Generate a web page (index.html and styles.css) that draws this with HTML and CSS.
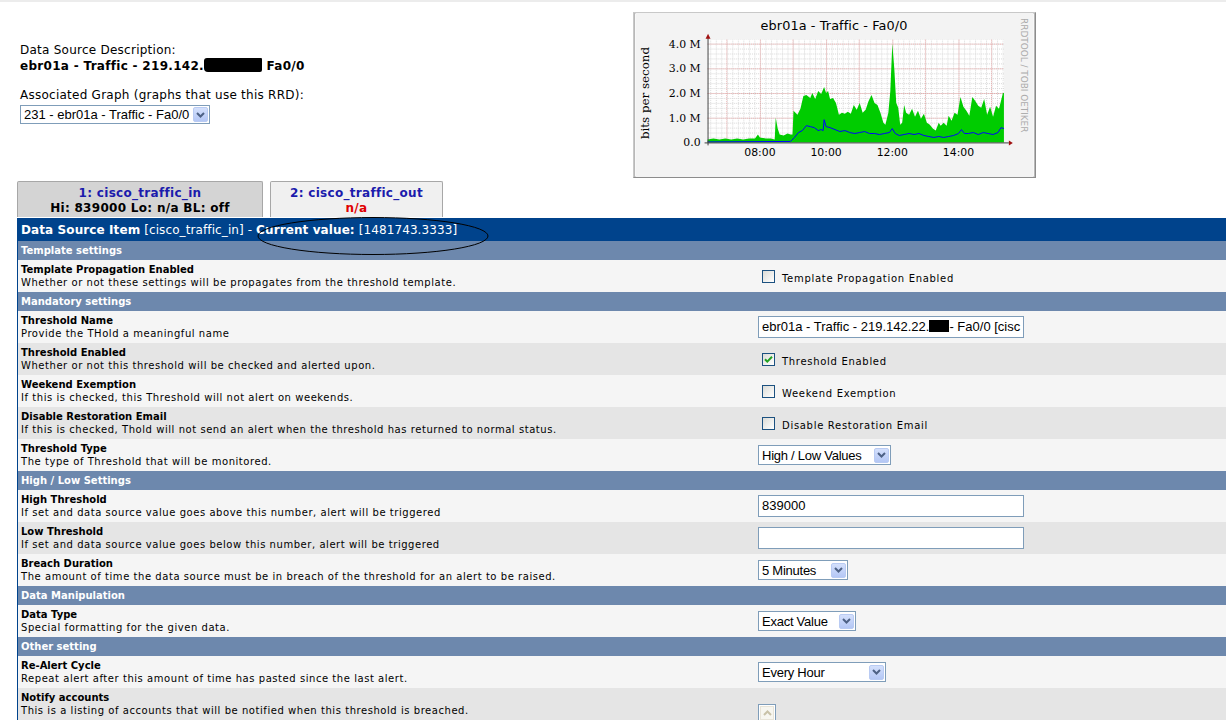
FILE: index.html
```html
<!DOCTYPE html>
<html>
<head>
<meta charset="utf-8">
<link rel="stylesheet" href="styles.css">
</head>
<body>
<div class="top">
  <div class="desc">
    <div class="lbl">Data Source Description:</div>
    <div class="val">ebr01a - Traffic - 219.142.<span class="redact"></span> Fa0/0</div>
    <div class="lbl assoc">Associated Graph (graphs that use this RRD):</div>
    <div class="sel sel-graph"><span class="sel-text">231 - ebr01a - Traffic - Fa0/0</span><span class="sel-btn"><svg width="9" height="6" viewBox="0 0 9 6"><path d="M1 1 L4.5 4.5 L8 1" fill="none" stroke="#4d6185" stroke-width="2"/></svg></span></div>
  </div>
  <svg class="graph" width="403" height="166" viewBox="0 0 403 166">
    <defs>
      <pattern id="minorV" x="92.5" y="0" width="5.583" height="4" patternUnits="userSpaceOnUse">
        <line x1="0.5" y1="0" x2="0.5" y2="4" stroke="#d8d8d8" stroke-width="1" stroke-dasharray="1,1"/>
      </pattern>
      <pattern id="minorH" x="0" y="1" width="4" height="5" patternUnits="userSpaceOnUse">
        <line x1="0" y1="0.5" x2="4" y2="0.5" stroke="#d8d8d8" stroke-width="1" stroke-dasharray="1,1"/>
      </pattern>
    </defs>
    <rect x="0" y="0" width="403" height="166" fill="#f3f3f3"/>
    <rect x="73" y="27" width="300" height="104" fill="#ffffff"/>
    <rect x="73" y="27" width="300" height="104" fill="url(#minorV)"/>
    <rect x="73" y="27" width="300" height="104" fill="url(#minorH)"/>
    <g stroke="#e8a8a8" stroke-width="1" stroke-dasharray="1,1">
      <line x1="92.5" y1="27" x2="92.5" y2="131"/>
      <line x1="126.5" y1="27" x2="126.5" y2="131"/>
      <line x1="159.5" y1="27" x2="159.5" y2="131"/>
      <line x1="193.5" y1="27" x2="193.5" y2="131"/>
      <line x1="226.5" y1="27" x2="226.5" y2="131"/>
      <line x1="260.5" y1="27" x2="260.5" y2="131"/>
      <line x1="293.5" y1="27" x2="293.5" y2="131"/>
      <line x1="327.5" y1="27" x2="327.5" y2="131"/>
      <line x1="360.5" y1="27" x2="360.5" y2="131"/>
      <line x1="73" y1="31.5" x2="373" y2="31.5"/>
      <line x1="73" y1="56.5" x2="373" y2="56.5"/>
      <line x1="73" y1="81.5" x2="373" y2="81.5"/>
      <line x1="73" y1="106.5" x2="373" y2="106.5"/>
    </g>
    <polygon fill="#00cc00" points="73,131 73,128 79,127 85,128 91,127 97,128 103,127 109,128 115,127 121,127 124,123 126,126 132,127 137,127 141,128 142,106 144,117 146,123 150,124 154,122 157,123 159,123 160,99 164,103 167,97 170,84 173,83 177,86 179,81 182,87 185,79 188,82 191,75 193,81 195,79 197,87 200,86 203,91 206,103 209,101 212,102 215,100 218,102 221,93 224,98 227,91 230,101 233,98 236,89 239,83 242,91 245,93 248,101 251,111 253,113 256,101 258,79 260,31 262,56 264,91 266,96 268,113 270,111 272,93 274,101 277,103 280,97 283,105 286,99 289,107 292,102 295,111 298,113 301,117 304,119 307,111 309,114 312,111 315,114 317,104 320,109 323,101 326,103 329,85 332,95 335,99 338,104 341,85 344,89 347,94 350,96 353,87 356,103 359,95 362,105 365,94 368,97 370,89 372,81 373,81 373,131"/>
    <polyline fill="none" stroke="#0000ff" stroke-width="1" points="73,130.5 157,130 161,126 165,121 169,119 173,114 177,115 181,116 185,119 188,118 190,119 191,108 193,115 197,116 202,118 207,120 212,119 217,121 222,122 227,121 232,120 237,122 242,122 247,123 252,122 257,121 260,117 263,122 267,124 272,123 277,122 282,123 287,122 292,124 297,125 302,126 307,125 312,126 317,125 322,124 327,122 330,118 333,122 337,122 342,121 347,123 352,121 357,122 362,123 367,121 370,116 373,117"/>
    <line x1="70" y1="131.5" x2="378" y2="131.5" stroke="#404040" stroke-width="1"/>
    <line x1="73.5" y1="134" x2="73.5" y2="25" stroke="#404040" stroke-width="1"/>
    <polygon points="378,129 382,131.5 378,134" fill="#a01010"/>
    <polygon points="71,26 73.5,21 76,26" fill="#a01010"/>
    <g class="g-ylab" text-anchor="end">
      <text x="66" y="35">4.0 M</text>
      <text x="66" y="60">3.0 M</text>
      <text x="66" y="85">2.0 M</text>
      <text x="66" y="110">1.0 M</text>
      <text x="66" y="135">0.0</text>
    </g>
    <g class="g-xlab" text-anchor="middle">
      <text x="126" y="145">08:00</text>
      <text x="193" y="145">10:00</text>
      <text x="260" y="145">12:00</text>
      <text x="327" y="145">14:00</text>
    </g>
    <text class="g-title" x="201" y="17" text-anchor="middle">ebr01a - Traffic - Fa0/0</text>
    <text class="g-vlab" x="0" y="0" text-anchor="middle" transform="translate(14,81) rotate(-90)">bits per second</text>
    <text class="g-wm" x="0" y="0" text-anchor="middle" transform="translate(390,63) rotate(90)">RRDTOOL / TOBI OETIKER</text>
  </svg>
</div>

<div class="tabs">
  <div class="tab tab-active">
    <div class="tab-name">1: cisco_traffic_in</div>
    <div class="tab-info">Hi: 839000 Lo: n/a BL: off</div>
  </div>
  <div class="tab">
    <div class="tab-name">2: cisco_traffic_out</div>
    <div class="tab-info tab-na">n/a</div>
  </div>
</div>

<div class="panel">
  <svg class="ellipse" width="236" height="42" viewBox="0 0 236 42"><ellipse cx="118" cy="20" rx="115" ry="18.5" fill="none" stroke="#000" stroke-width="1"/></svg>
  <div class="hdr"><b>Data Source Item</b> [cisco_traffic_in] - <b>Current value:</b> [1481743.3333]</div>

  <div class="sec">Template settings</div>
  <div class="row light">
    <div class="info"><div class="t">Template Propagation Enabled</div><div class="d">Whether or not these settings will be propagates from the threshold template.</div></div>
    <div class="ctl"><span class="cb"></span><span class="cbl">Template Propagation Enabled</span></div>
  </div>

  <div class="sec">Mandatory settings</div>
  <div class="row light">
    <div class="info"><div class="t">Threshold Name</div><div class="d">Provide the THold a meaningful name</div></div>
    <div class="ctl"><div class="inp">ebr01a - Traffic - 219.142.22.<span class="redact2"></span>- Fa0/0 [cisc</div></div>
  </div>
  <div class="row dark">
    <div class="info"><div class="t">Threshold Enabled</div><div class="d">Whether or not this threshold will be checked and alerted upon.</div></div>
    <div class="ctl"><span class="cb"><svg width="11" height="11" viewBox="0 0 11 11"><path d="M2 5.2 L4.3 7.6 L9 2.8" fill="none" stroke="#21a121" stroke-width="2"/></svg></span><span class="cbl">Threshold Enabled</span></div>
  </div>
  <div class="row light">
    <div class="info"><div class="t">Weekend Exemption</div><div class="d">If this is checked, this Threshold will not alert on weekends.</div></div>
    <div class="ctl"><span class="cb"></span><span class="cbl">Weekend Exemption</span></div>
  </div>
  <div class="row dark">
    <div class="info"><div class="t">Disable Restoration Email</div><div class="d">If this is checked, Thold will not send an alert when the threshold has returned to normal status.</div></div>
    <div class="ctl"><span class="cb"></span><span class="cbl">Disable Restoration Email</span></div>
  </div>
  <div class="row light">
    <div class="info"><div class="t">Threshold Type</div><div class="d">The type of Threshold that will be monitored.</div></div>
    <div class="ctl"><div class="sel sel-type"><span class="sel-text">High / Low Values</span><span class="sel-btn"><svg width="9" height="6" viewBox="0 0 9 6"><path d="M1 1 L4.5 4.5 L8 1" fill="none" stroke="#4d6185" stroke-width="2"/></svg></span></div></div>
  </div>

  <div class="sec">High / Low Settings</div>
  <div class="row light">
    <div class="info"><div class="t">High Threshold</div><div class="d">If set and data source value goes above this number, alert will be triggered</div></div>
    <div class="ctl"><div class="inp">839000</div></div>
  </div>
  <div class="row dark">
    <div class="info"><div class="t">Low Threshold</div><div class="d">If set and data source value goes below this number, alert will be triggered</div></div>
    <div class="ctl"><div class="inp"></div></div>
  </div>
  <div class="row light">
    <div class="info"><div class="t">Breach Duration</div><div class="d">The amount of time the data source must be in breach of the threshold for an alert to be raised.</div></div>
    <div class="ctl"><div class="sel sel-breach"><span class="sel-text">5 Minutes</span><span class="sel-btn"><svg width="9" height="6" viewBox="0 0 9 6"><path d="M1 1 L4.5 4.5 L8 1" fill="none" stroke="#4d6185" stroke-width="2"/></svg></span></div></div>
  </div>

  <div class="sec">Data Manipulation</div>
  <div class="row light">
    <div class="info"><div class="t">Data Type</div><div class="d">Special formatting for the given data.</div></div>
    <div class="ctl"><div class="sel sel-dtype"><span class="sel-text">Exact Value</span><span class="sel-btn"><svg width="9" height="6" viewBox="0 0 9 6"><path d="M1 1 L4.5 4.5 L8 1" fill="none" stroke="#4d6185" stroke-width="2"/></svg></span></div></div>
  </div>

  <div class="sec">Other setting</div>
  <div class="row light">
    <div class="info"><div class="t">Re-Alert Cycle</div><div class="d">Repeat alert after this amount of time has pasted since the last alert.</div></div>
    <div class="ctl"><div class="sel sel-realert"><span class="sel-text">Every Hour</span><span class="sel-btn"><svg width="9" height="6" viewBox="0 0 9 6"><path d="M1 1 L4.5 4.5 L8 1" fill="none" stroke="#4d6185" stroke-width="2"/></svg></span></div></div>
  </div>
  <div class="row dark row-tall">
    <div class="info"><div class="t">Notify accounts</div><div class="d">This is a listing of accounts that will be notified when this threshold is breached.</div></div>
    <div class="ctl ctl-top"><div class="list"><span class="list-up"><svg width="9" height="6" viewBox="0 0 9 6"><path d="M1 5 L4.5 1.5 L8 5" fill="none" stroke="#c9c2a8" stroke-width="2"/></svg></span></div></div>
  </div>
</div>
</body>
</html>
```

FILE: styles.css
```css
html, body {
  margin: 0;
  padding: 0;
  overflow: hidden;
  background: #ffffff;
}
body {
  font-family: "DejaVu Sans", Verdana, sans-serif;
  color: #000;
  border-top: 2px solid #ececec;
}

.top {
  display: flex;
  padding: 10px 0 0 20px;
  height: 169px;
}
.desc {
  width: 613px;
  padding-top: 31px;
  font-size: 12px;
  line-height: 15px;
}
.lbl {
  letter-spacing: 0.25px;
}
.val {
  font-weight: bold;
  letter-spacing: 0.3px;
}
.redact {
  display: inline-block;
  width: 58px;
  height: 14px;
  background: #000;
  vertical-align: -2px;
  border-radius: 3px 1px 2px 4px;
}
.assoc {
  margin-top: 14px;
}
.graph {
  display: block;
  border-style: solid;
  border-width: 1px;
  border-color: #c8c8c8 #8c8c8c #8c8c8c #c8c8c8;
  box-shadow: inset 0 0 0 1px #b8b8b8;
  box-sizing: border-box;
}
.g-ylab text { font-family: "DejaVu Serif", serif; font-size: 11px; fill: #000; }
.g-xlab text { font-family: "DejaVu Sans", sans-serif; font-size: 11px; fill: #000; }
.g-title { font-family: "DejaVu Sans", sans-serif; font-size: 13px; letter-spacing: 0.1px; fill: #000; }
.g-vlab { font-family: "DejaVu Serif", serif; font-size: 12px; fill: #000; }
.g-wm { font-family: "DejaVu Sans", sans-serif; font-size: 9px; fill: #ababab; }

/* selects */
.sel {
  display: flex;
  align-items: center;
  box-sizing: border-box;
  height: 19px;
  border: 1px solid #7f9db9;
  background: #fff;
  font-family: "Liberation Sans", Arial, sans-serif;
  font-size: 13px;
  letter-spacing: -0.25px;
}
.sel-text {
  flex: 1;
  padding-left: 3px;
  white-space: nowrap;
  overflow: hidden;
}
.sel-btn {
  width: 15px;
  height: 15px;
  margin-right: 1px;
  box-sizing: border-box;
  border: 1px solid #b9cbf3;
  border-radius: 2px;
  background: linear-gradient(#d4e0fc, #b4c7f5);
  display: flex;
  align-items: center;
  justify-content: center;
}
.sel-graph { width: 190px; margin-top: 2px; letter-spacing: 0; }
.sel-type { width: 133px; height: 20px; }
.sel-breach { width: 90px; height: 20px; }
.sel-dtype { width: 98px; height: 20px; }
.sel-realert { width: 128px; height: 20px; }

/* tabs */
.tabs {
  display: flex;
  gap: 7px;
  margin: 0 0 1px 17px;
}
.tab {
  box-sizing: border-box;
  width: 173px;
  height: 36px;
  border: 1px solid #a7a7a7;
  border-bottom: none;
  border-radius: 2px 2px 0 0;
  background: #f0f0f0;
  text-align: center;
  font-size: 12px;
  font-weight: bold;
  letter-spacing: 0.3px;
  line-height: 15px;
  padding-top: 4px;
}
.tab-active {
  width: 246px;
  background: #d4d4d4;
}
.tab-name { color: #1b1bac; }
.tab-info { color: #000; }
.tab-na { color: #e00000; }

/* panel */
.panel {
  position: relative;
  margin-left: 17px;
  border-left: 1px solid #00438c;
}
.ellipse {
  position: absolute;
  left: 237px;
  top: -2px;
  z-index: 2;
}
.hdr {
  height: 23px;
  line-height: 25px;
  background: #00438c;
  color: #fff;
  font-size: 12px;
  letter-spacing: 0.1px;
  padding-left: 3px;
  white-space: nowrap;
  overflow: hidden;
}
.sec {
  height: 19px;
  line-height: 19px;
  background: #6d88ad;
  color: #fff;
  font-size: 10px;
  font-weight: bold;
  padding-left: 3px;
}
.row {
  display: flex;
  height: 32px;
  box-sizing: border-box;
}
.light { background: #f5f5f5; }
.dark { background: #e5e5e5; }
.row-tall { height: 60px; }
.info {
  width: 737px;
  padding: 3px 0 0 3px;
  font-size: 10px;
  line-height: 13px;
  white-space: nowrap;
}
.t { font-weight: bold; }
.d { letter-spacing: 0.55px; }
.ctl {
  display: flex;
  align-items: center;
}
.ctl-top {
  align-items: flex-start;
  padding-top: 16px;
}
.cb {
  box-sizing: border-box;
  width: 13px;
  height: 13px;
  margin-left: 4px;
  border: 1px solid #1c5180;
  background: linear-gradient(135deg, #dcdcd7, #ffffff);
  display: flex;
  align-items: center;
  justify-content: center;
}
.cbl {
  margin-left: 7px;
  font-size: 10px;
  letter-spacing: 0.7px;
  padding-top: 4px;
}
.inp {
  box-sizing: border-box;
  width: 266px;
  height: 22px;
  border: 1px solid #7f9db9;
  background: #fff;
  font-family: "Liberation Sans", Arial, sans-serif;
  font-size: 13px;
  letter-spacing: 0;
  line-height: 20px;
  padding-left: 3px;
  white-space: nowrap;
  overflow: hidden;
}
.redact2 {
  display: inline-block;
  width: 20px;
  height: 12px;
  background: #000;
  vertical-align: -1px;
}
.list {
  box-sizing: border-box;
  width: 18px;
  height: 30px;
  border: 1px solid #7f9db9;
  background: #fff;
  padding: 1px;
}
.list-up {
  display: flex;
  align-items: center;
  justify-content: center;
  box-sizing: border-box;
  width: 14px;
  height: 14px;
  border: 1px solid #e8e4d8;
  background: #f7f6f0;
}
```
